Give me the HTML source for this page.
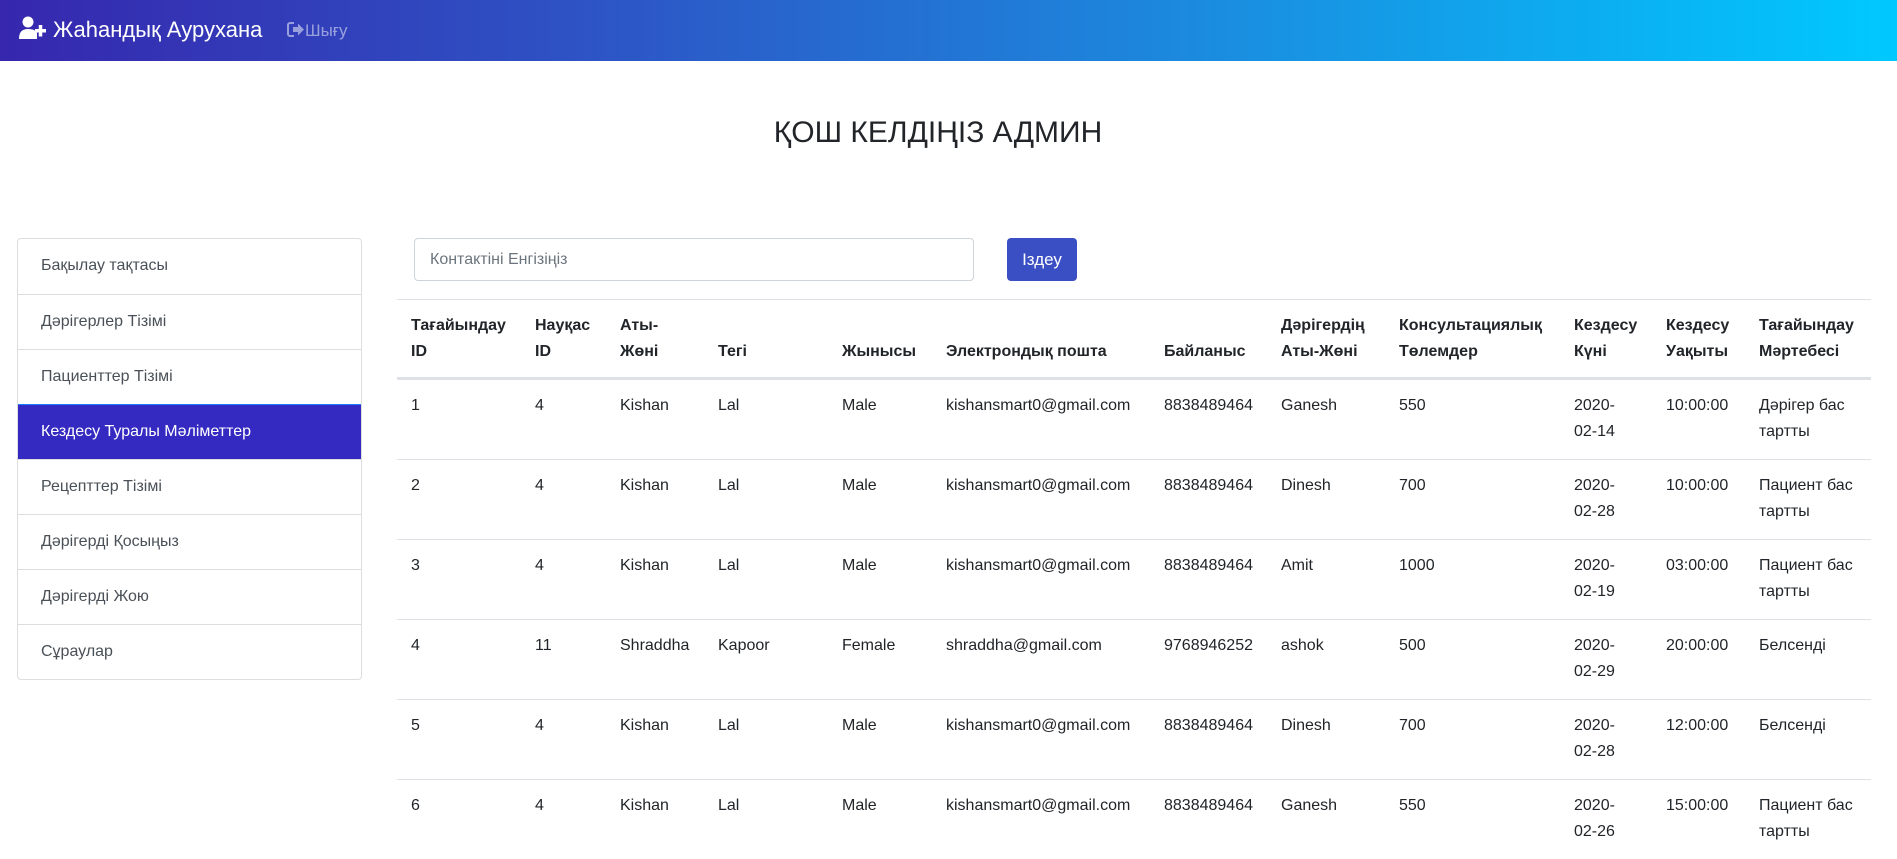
<!DOCTYPE html>
<html><head><meta charset="utf-8">
<style>
*{box-sizing:border-box;margin:0;padding:0}
body{width:1897px;height:850px;overflow:hidden;background:#fff;font-family:"Liberation Sans","DejaVu Sans",sans-serif;color:#212529;position:relative}
.nav{position:absolute;left:0;top:0;width:1897px;height:61px;background:linear-gradient(90deg,#3627ae 0%,#2e52c4 30%,#1a8ee0 65%,#00c9ff 100%)}
.brand{position:absolute;left:18px;top:16px;color:#fff;font-size:22px;line-height:28px}
.brand svg{vertical-align:-3px;margin-right:5px}
.logout{position:absolute;left:287px;top:19px;color:rgba(255,255,255,.5);font-size:17px;line-height:24px}
.title{position:absolute;left:0;width:1876px;top:114px;text-align:center;font-size:30px;line-height:38px;color:#212529}
.side{position:absolute;left:17px;top:238px;width:345px;border:1px solid #ddd;border-radius:4px;overflow:hidden}
.side div{height:55px;line-height:54px;padding-left:23px;font-size:16px;color:#495057;border-top:1px solid #ddd}
.side div:first-child{border-top:none}
.side .act{background:#3429c0;color:#fff;border-top:1px solid #1e7dff}
.inp{position:absolute;left:414px;top:238px;width:560px;height:43px;border:1px solid #ced4da;border-radius:4px;font-size:16px;color:#6c757d;padding-left:15px;line-height:41px}
.btn{position:absolute;left:1007px;top:238px;width:70px;height:43px;background:#3a4fc4;border-radius:4px;color:#fff;font-size:17px;text-align:center;line-height:43px}
table{position:absolute;left:397px;top:299px;width:1474px;border-collapse:collapse;table-layout:fixed;font-size:16px;line-height:26px}
th,td{text-align:left;vertical-align:top;padding:13px 10px 14px 14px;border-top:1px solid #dee2e6}
th{font-weight:bold;vertical-align:bottom;border-bottom:3px solid #dee2e6;height:79px;padding-bottom:12px}
td{height:79px}
</style></head><body>
<div class="nav">
<div class="brand"><svg width="30" height="24" viewBox="0 0 30 24"><circle cx="10" cy="6" r="5.5" fill="#fff"/><path d="M1 23c0-7 3-10 9-10s8 2 9 4v6z" fill="#fff"/><rect x="17" y="13" width="11" height="3.5" fill="#fff"/><rect x="20.75" y="9" width="3.5" height="11.5" fill="#fff"/></svg>Жаһандық Аурухана</div>
<div class="logout"><svg width="18" height="15" viewBox="0 0 18 15" style="vertical-align:-1px"><path d="M7 1H3a2 2 0 0 0-2 2v9a2 2 0 0 0 2 2h4" stroke="rgba(255,255,255,.5)" stroke-width="2" fill="none"/><path d="M6 5h5V1.5l6 6-6 6V10H6z" fill="rgba(255,255,255,.5)"/></svg>Шығу</div>
</div>
<div class="title">ҚОШ КЕЛДІҢІЗ АДМИН</div>
<div class="side">
<div>Бақылау тақтасы</div>
<div>Дәрігерлер Тізімі</div>
<div>Пациенттер Тізімі</div>
<div class="act">Кездесу Туралы Мәліметтер</div>
<div>Рецепттер Тізімі</div>
<div>Дәрігерді Қосыңыз</div>
<div>Дәрігерді Жою</div>
<div>Сұраулар</div>
</div>
<div class="inp">Контактіні Енгізіңіз</div>
<div class="btn">Іздеу</div>
<table>
<colgroup><col style="width:124px"><col style="width:85px"><col style="width:98px"><col style="width:124px"><col style="width:104px"><col style="width:218px"><col style="width:117px"><col style="width:118px"><col style="width:175px"><col style="width:92px"><col style="width:93px"><col style="width:126px"></colgroup>
<tr><th>Тағайындау ID</th><th>Науқас ID</th><th>Аты-Жөні</th><th>Тегі</th><th>Жынысы</th><th>Электрондық пошта</th><th>Байланыс</th><th>Дәрігердің Аты-Жөні</th><th>Консультациялық Төлемдер</th><th>Кездесу Күні</th><th>Кездесу Уақыты</th><th>Тағайындау Мәртебесі</th></tr>
<tr><td>1</td><td>4</td><td>Kishan</td><td>Lal</td><td>Male</td><td>kishansmart0@gmail.com</td><td>8838489464</td><td>Ganesh</td><td>550</td><td>2020-<br>02-14</td><td>10:00:00</td><td>Дәрігер бас тартты</td></tr>
<tr><td>2</td><td>4</td><td>Kishan</td><td>Lal</td><td>Male</td><td>kishansmart0@gmail.com</td><td>8838489464</td><td>Dinesh</td><td>700</td><td>2020-<br>02-28</td><td>10:00:00</td><td>Пациент бас тартты</td></tr>
<tr><td>3</td><td>4</td><td>Kishan</td><td>Lal</td><td>Male</td><td>kishansmart0@gmail.com</td><td>8838489464</td><td>Amit</td><td>1000</td><td>2020-<br>02-19</td><td>03:00:00</td><td>Пациент бас тартты</td></tr>
<tr><td>4</td><td>11</td><td>Shraddha</td><td>Kapoor</td><td>Female</td><td>shraddha@gmail.com</td><td>9768946252</td><td>ashok</td><td>500</td><td>2020-<br>02-29</td><td>20:00:00</td><td>Белсенді</td></tr>
<tr><td>5</td><td>4</td><td>Kishan</td><td>Lal</td><td>Male</td><td>kishansmart0@gmail.com</td><td>8838489464</td><td>Dinesh</td><td>700</td><td>2020-<br>02-28</td><td>12:00:00</td><td>Белсенді</td></tr>
<tr><td>6</td><td>4</td><td>Kishan</td><td>Lal</td><td>Male</td><td>kishansmart0@gmail.com</td><td>8838489464</td><td>Ganesh</td><td>550</td><td>2020-<br>02-26</td><td>15:00:00</td><td>Пациент бас тартты</td></tr>
</table>
</body></html>
